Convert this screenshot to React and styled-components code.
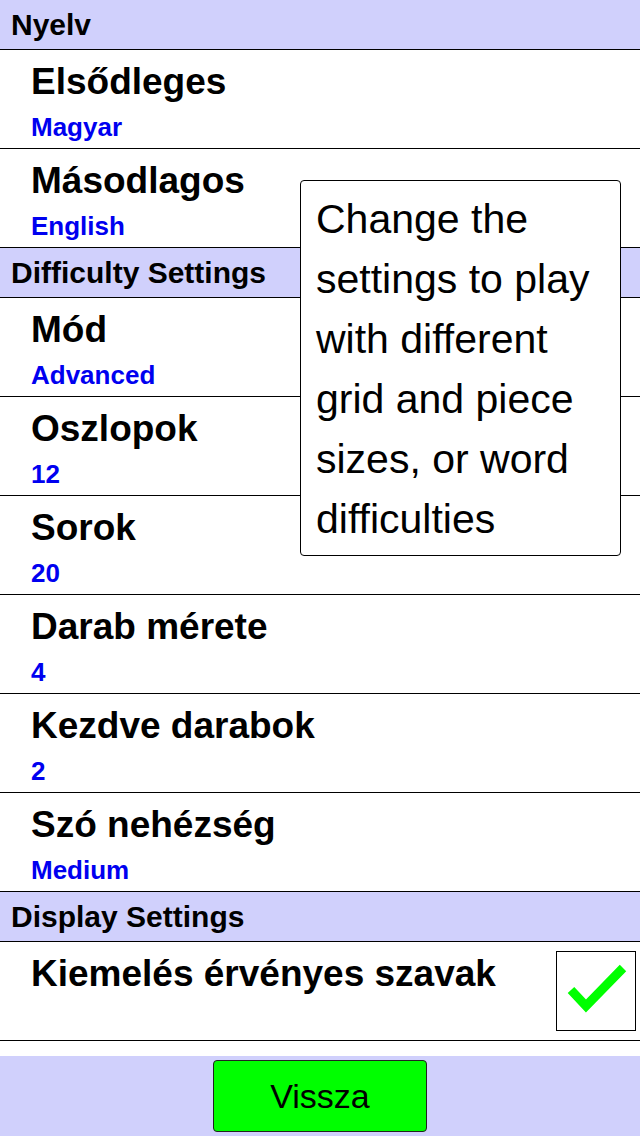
import React from 'react';
import styled, { createGlobalStyle } from 'styled-components';

const GlobalStyle = createGlobalStyle`
    html, body {
        margin: 0;
        padding: 0;
        background: white;
        font-family: "Liberation Sans", Arial, sans-serif;
    }
`

const sections = [
    {
        title: 'Nyelv',
        items: [
            { label: 'Elsődleges', value: 'Magyar' },
            { label: 'Másodlagos', value: 'English' },
        ],
    },
    {
        title: 'Difficulty Settings',
        items: [
            { label: 'Mód', value: 'Advanced' },
            { label: 'Oszlopok', value: '12' },
            { label: 'Sorok', value: '20' },
            { label: 'Darab mérete', value: '4' },
            { label: 'Kezdve darabok', value: '2' },
            { label: 'Szó nehézség', value: 'Medium' },
        ],
    },
]

function App() {
    const [highlight, setHighlight] = React.useState(true)
    return (
        <Screen>
            <GlobalStyle />
            <SettingsList>
                {sections.map(section => (
                    <React.Fragment key={section.title}>
                        <SectionHeader>{section.title}</SectionHeader>
                        {section.items.map(item => (
                            <Row key={item.label}>
                                <RowLabel>{item.label}</RowLabel>
                                <RowValue>{item.value}</RowValue>
                            </Row>
                        ))}
                    </React.Fragment>
                ))}
                <SectionHeader>Display Settings</SectionHeader>
                <CheckRow>
                    <RowLabel>Kiemelés érvényes szavak</RowLabel>
                    <CheckBox onClick={() => setHighlight(!highlight)}>
                        {highlight && (
                            <svg width="78" height="78" viewBox="0 0 78 78">
                                <polyline points="14,38 29,54 66,16" fill="none" stroke="#00ff00" strokeWidth="9" />
                            </svg>
                        )}
                    </CheckBox>
                </CheckRow>
                <Tooltip>
                    Change the settings to play with different grid and piece sizes, or word difficulties
                </Tooltip>
            </SettingsList>
            <Footer>
                <BackButton>Vissza</BackButton>
            </Footer>
        </Screen>
    )
}

const Screen = styled.div`
    height: 1136px;
    display: flex;
    flex-direction: column;
    overflow: hidden;
`

const SettingsList = styled.div`
    position: relative;
    flex: 1;
    display: flex;
    flex-direction: column;
`

const SectionHeader = styled.div`
    height: 49px;
    box-sizing: content-box;
    background-color: #d0d0fc;
    border-bottom: 1px solid black;
    padding-left: 11px;
    font-size: 30px;
    font-weight: bold;
    line-height: 50px;
    color: black;
`

const Row = styled.div`
    height: 98px;
    border-bottom: 1px solid black;
    padding-left: 31px;
    display: flex;
    flex-direction: column;
`

const CheckRow = styled.div`
    height: 98px;
    border-bottom: 1px solid black;
    padding-left: 31px;
    padding-right: 4px;
    display: flex;
    justify-content: space-between;
    align-items: flex-start;
`

const RowLabel = styled.div`
    font-size: 37px;
    font-weight: bold;
    line-height: 36px;
    margin-top: 14px;
    color: black;
`

const RowValue = styled.div`
    font-size: 26px;
    font-weight: bold;
    line-height: 25px;
    margin-top: 15px;
    color: #0000f0;
`

const CheckBox = styled.div`
    width: 78px;
    height: 78px;
    margin-top: 9px;
    border: 1px solid black;
    background: white;
    cursor: pointer;
    svg {
        display: block;
    }
`

const Tooltip = styled.div`
    position: absolute;
    left: 300px;
    top: 180px;
    width: 290px;
    height: 366px;
    padding: 8px 14px 0 15px;
    border: 1px solid black;
    border-radius: 4px;
    background: white;
    font-size: 41px;
    line-height: 60px;
    color: black;
`

const Footer = styled.div`
    height: 80px;
    background-color: #d0d0fc;
    display: flex;
    justify-content: center;
    align-items: center;
`

const BackButton = styled.button`
    width: 214px;
    height: 72px;
    background-color: #00ff00;
    border: 1px solid #222;
    border-radius: 4px;
    font-family: "Liberation Sans", Arial, sans-serif;
    font-size: 34px;
    color: black;
    cursor: pointer;
`

export default App;
